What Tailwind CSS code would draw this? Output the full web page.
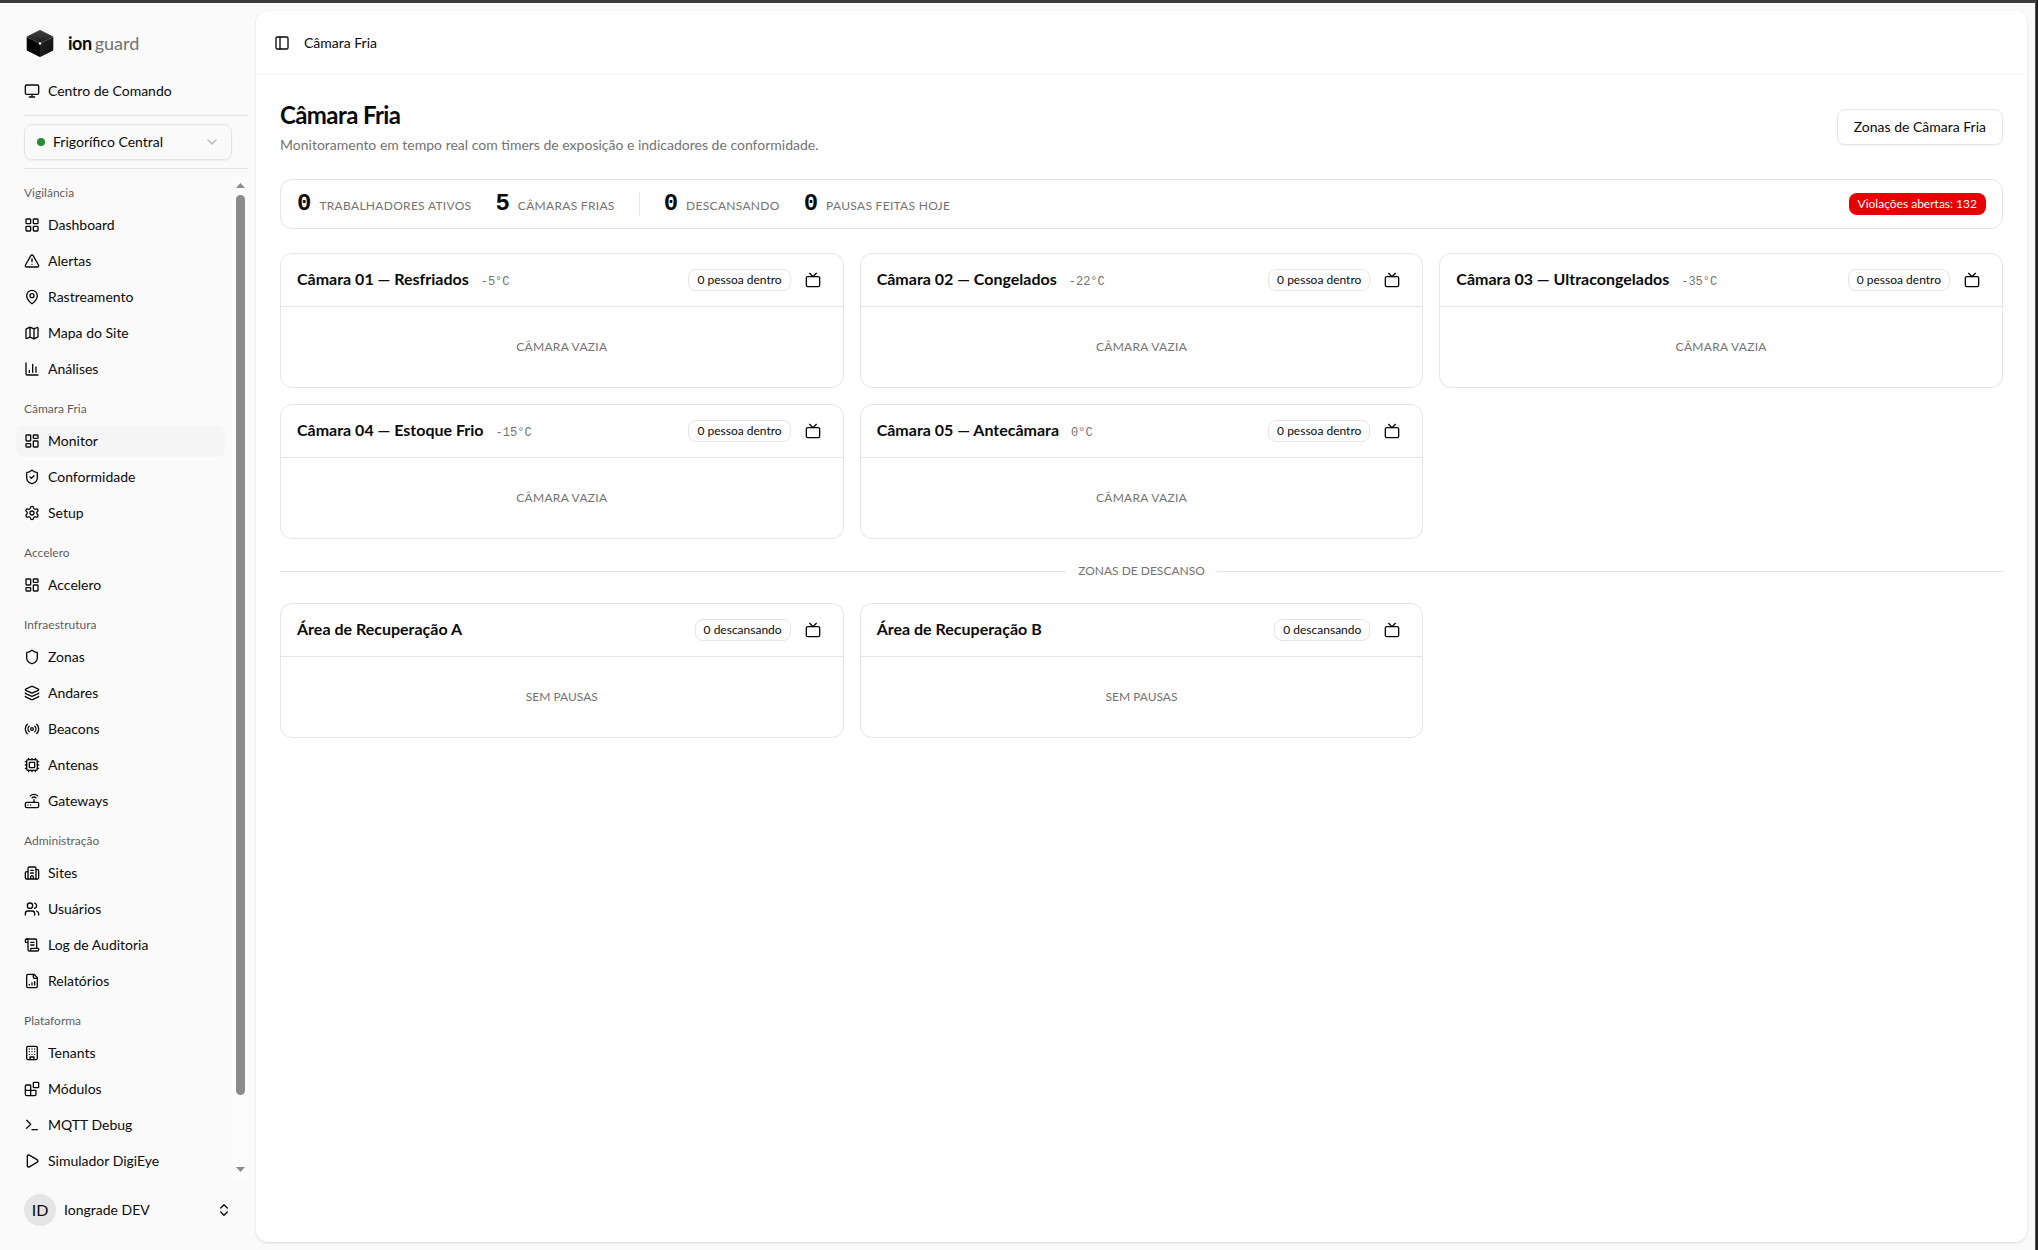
<!DOCTYPE html>
<html lang="pt-BR">
<head>
  <meta charset="UTF-8" />
  <meta name="viewport" content="width=device-width, initial-scale=1.0" />
  <title>Câmara Fria - ionguard</title>
  <script src="https://cdn.jsdelivr.net/npm/@tailwindcss/browser@4"></script>
</head>
<body class="h-screen overflow-hidden bg-[#222222] pr-[2px] font-['Lato',sans-serif] text-sm text-neutral-950">

  <!-- Icon sprite -->
  <svg class="hidden" xmlns="http://www.w3.org/2000/svg">
    <symbol id="monitor" viewBox="0 0 24 24"><rect width="20" height="14" x="2" y="3" rx="2" /><path d="M8 21h8M12 17v4" /></symbol>
    <symbol id="chevron-down" viewBox="0 0 24 24"><path d="m6 9 6 6 6-6" /></symbol>
    <symbol id="chevrons-up-down" viewBox="0 0 24 24"><path d="m7 15 5 5 5-5M7 9l5-5 5 5" /></symbol>
    <symbol id="panel-left" viewBox="0 0 24 24"><rect width="18" height="18" x="3" y="3" rx="2" /><path d="M9 3v18" /></symbol>
    <symbol id="layout-grid" viewBox="0 0 24 24"><rect width="7" height="7" x="3" y="3" rx="1" /><rect width="7" height="7" x="14" y="3" rx="1" /><rect width="7" height="7" x="14" y="14" rx="1" /><rect width="7" height="7" x="3" y="14" rx="1" /></symbol>
    <symbol id="layout-dashboard" viewBox="0 0 24 24"><rect width="7" height="9" x="3" y="3" rx="1" /><rect width="7" height="5" x="14" y="3" rx="1" /><rect width="7" height="9" x="14" y="12" rx="1" /><rect width="7" height="5" x="3" y="16" rx="1" /></symbol>
    <symbol id="alert" viewBox="0 0 24 24"><path d="m21.73 18-8-14a2 2 0 0 0-3.48 0l-8 14A2 2 0 0 0 4 21h16a2 2 0 0 0 1.73-3M12 9v4M12 17h.01" /></symbol>
    <symbol id="map-pin" viewBox="0 0 24 24"><path d="M20 10c0 4.993-5.539 10.193-7.399 11.799a1 1 0 0 1-1.202 0C9.539 20.193 4 14.993 4 10a8 8 0 0 1 16 0" /><circle cx="12" cy="10" r="3" /></symbol>
    <symbol id="map" viewBox="0 0 24 24"><path d="M14.106 5.553a2 2 0 0 0 1.788 0l3.659-1.83A1 1 0 0 1 21 4.619v12.764a1 1 0 0 1-.553.894l-4.553 2.277a2 2 0 0 1-1.788 0l-4.212-2.106a2 2 0 0 0-1.788 0l-3.659 1.83A1 1 0 0 1 3 19.381V6.618a1 1 0 0 1 .553-.894l4.553-2.277a2 2 0 0 1 1.788 0zM15 5.764v15M9 3.236v15" /></symbol>
    <symbol id="chart" viewBox="0 0 24 24"><path d="M3 3v16a2 2 0 0 0 2 2h16M18 17V9M13 17V5M8 17v-3" /></symbol>
    <symbol id="shield" viewBox="0 0 24 24"><path d="M20 13c0 5-3.5 7.5-7.66 8.95a1 1 0 0 1-.67-.01C7.5 20.5 4 18 4 13V6a1 1 0 0 1 1-1c2 0 4.5-1.2 6.24-2.72a1.17 1.17 0 0 1 1.52 0C14.51 3.81 17 5 19 5a1 1 0 0 1 1 1z" /></symbol>
    <symbol id="shield-check" viewBox="0 0 24 24"><path d="M20 13c0 5-3.5 7.5-7.66 8.95a1 1 0 0 1-.67-.01C7.5 20.5 4 18 4 13V6a1 1 0 0 1 1-1c2 0 4.5-1.2 6.24-2.72a1.17 1.17 0 0 1 1.52 0C14.51 3.81 17 5 19 5a1 1 0 0 1 1 1z" /><path d="m9 12 2 2 4-4" /></symbol>
    <symbol id="settings" viewBox="0 0 24 24"><path d="M9.671 4.136a2.34 2.34 0 0 1 4.659 0 2.34 2.34 0 0 0 3.319 1.915 2.34 2.34 0 0 1 2.33 4.033 2.34 2.34 0 0 0 0 3.831 2.34 2.34 0 0 1-2.33 4.033 2.34 2.34 0 0 0-3.319 1.915 2.34 2.34 0 0 1-4.659 0 2.34 2.34 0 0 0-3.32-1.915 2.34 2.34 0 0 1-2.33-4.033 2.34 2.34 0 0 0 0-3.831A2.34 2.34 0 0 1 6.35 6.051a2.34 2.34 0 0 0 3.319-1.915" /><circle cx="12" cy="12" r="3" /></symbol>
    <symbol id="layers" viewBox="0 0 24 24"><path d="M12.83 2.18a2 2 0 0 0-1.66 0L2.6 6.08a1 1 0 0 0 0 1.83l8.58 3.91a2 2 0 0 0 1.66 0l8.58-3.9a1 1 0 0 0 0-1.83z" /><path d="M2 12a1 1 0 0 0 .58.91l8.6 3.91a2 2 0 0 0 1.65 0l8.58-3.9A1 1 0 0 0 22 12" /><path d="M2 17a1 1 0 0 0 .58.91l8.6 3.91a2 2 0 0 0 1.65 0l8.58-3.9A1 1 0 0 0 22 17" /></symbol>
    <symbol id="radio" viewBox="0 0 24 24"><path d="M4.9 19.1C1 15.2 1 8.8 4.9 4.9M7.8 16.2c-2.3-2.3-2.3-6.1 0-8.5M16.2 7.8c2.3 2.3 2.3 6.1 0 8.5M19.1 4.9C23 8.8 23 15.1 19.1 19" /><circle cx="12" cy="12" r="2" /></symbol>
    <symbol id="cpu" viewBox="0 0 24 24"><path d="M12 20v2M12 2v2M17 20v2M17 2v2M2 12h2M2 17h2M2 7h2M20 12h2M20 17h2M20 7h2M7 20v2M7 2v2" /><rect x="4" y="4" width="16" height="16" rx="2" /><rect x="8" y="8" width="8" height="8" rx="1" /></symbol>
    <symbol id="router" viewBox="0 0 24 24"><rect width="20" height="8" x="2" y="14" rx="2" /><path d="M6.01 18H6M10.01 18H10M15 10v4M17.84 7.17a4 4 0 0 0-5.66 0M20.66 4.34a8 8 0 0 0-11.31 0" /></symbol>
    <symbol id="building-2" viewBox="0 0 24 24"><path d="M10 12h4M10 8h4M14 21v-3a2 2 0 0 0-4 0v3M6 10H4a2 2 0 0 0-2 2v7a2 2 0 0 0 2 2h16a2 2 0 0 0 2-2V9a2 2 0 0 0-2-2h-2" /><path d="M6 21V5a2 2 0 0 1 2-2h8a2 2 0 0 1 2 2v16" /></symbol>
    <symbol id="users" viewBox="0 0 24 24"><path d="M16 21v-2a4 4 0 0 0-4-4H6a4 4 0 0 0-4 4v2M16 3.128a4 4 0 0 1 0 7.744M22 21v-2a4 4 0 0 0-3-3.87" /><circle cx="9" cy="7" r="4" /></symbol>
    <symbol id="scroll" viewBox="0 0 24 24"><path d="M15 12h-5M15 8h-5M19 17V5a2 2 0 0 0-2-2H4" /><path d="M8 21h12a2 2 0 0 0 2-2v-1a1 1 0 0 0-1-1H11a1 1 0 0 0-1 1v1a2 2 0 1 1-4 0V5a2 2 0 1 0-4 0v2a1 1 0 0 0 1 1h3" /></symbol>
    <symbol id="file-chart" viewBox="0 0 24 24"><path d="M15 2H6a2 2 0 0 0-2 2v16a2 2 0 0 0 2 2h12a2 2 0 0 0 2-2V7z" /><path d="M14 2v4a2 2 0 0 0 2 2h4M8 18v-1M12 18v-3M16 18v-5" /></symbol>
    <symbol id="building" viewBox="0 0 24 24"><rect width="16" height="20" x="4" y="2" rx="2" /><path d="M9 22v-4h6v4M8 6h.01M16 6h.01M12 6h.01M12 10h.01M12 14h.01M16 10h.01M16 14h.01M8 10h.01M8 14h.01" /></symbol>
    <symbol id="blocks" viewBox="0 0 24 24"><path d="M10 22V7a1 1 0 0 0-1-1H4a2 2 0 0 0-2 2v12a2 2 0 0 0 2 2h12a2 2 0 0 0 2-2v-5a1 1 0 0 0-1-1H2" /><rect x="14" y="2" width="8" height="8" rx="1" /></symbol>
    <symbol id="terminal" viewBox="0 0 24 24"><path d="M12 19h8M4 17l6-6-6-6" /></symbol>
    <symbol id="play" viewBox="0 0 24 24"><path d="M5 5a2 2 0 0 1 3.008-1.728l11.997 6.998a2 2 0 0 1 .003 3.458l-12 7A2 2 0 0 1 5 19z" /></symbol>
    <symbol id="tv" viewBox="0 0 24 24"><path d="m17 2-5 5-5-5" /><rect width="20" height="15" x="2" y="7" rx="2" /></symbol>
  </svg>

  <div class="flex h-full border-t-3 border-r border-t-[#3c3c3c] border-r-[#555555] bg-neutral-50">

    <!-- Sidebar -->
    <aside class="flex w-64 shrink-0 flex-col py-2">
      <a href="#" class="flex h-16 shrink-0 items-center gap-3 pl-6">
        <svg class="size-8" viewBox="0 0 32 32">
          <defs>
            <linearGradient id="cube-top" x1="0" y1="0" x2="0" y2="1"><stop stop-color="#444444" /><stop offset="1" stop-color="#1c1c1c" /></linearGradient>
            <linearGradient id="cube-right" x1="0" y1="0" x2="1" y2="1"><stop stop-color="#262626" /><stop offset="1" stop-color="#0c0c0c" /></linearGradient>
          </defs>
          <path d="M15.300 3.300a1.500 1.500 0 0 1 1.400 0l12 6 .6.700L16 16.500 2.700 10l.6-.7z" fill="url(#cube-top)" />
          <path d="M2.700 10 16 16.500V30l-.7-.2-12-6a1.200 1.200 0 0 1-.6-1z" fill="#040404" />
          <path d="M29.300 10 16 16.500V30l.7-.2 12-6a1.200 1.200 0 0 0 .6-1z" fill="url(#cube-right)" />
          <path d="M2.700 10 16 16.500 29.300 10" fill="none" stroke="#4a4a4a" stroke-width=".5" />
          <circle cx="16" cy="16.500" r="1.200" fill="#ffffff" />
        </svg>
        <span class="flex gap-[3px] text-lg"><b class="font-bold tracking-tight">ion</b><span class="text-neutral-500">guard</span></span>
      </a>

      <a href="#" class="mx-4 flex h-8 shrink-0 items-center gap-2 rounded-lg px-2">
        <svg class="size-4 fill-none stroke-current stroke-2" stroke-linecap="round" stroke-linejoin="round"><use href="#monitor" /></svg>
        Centro de Comando
      </a>

      <div class="mt-2 mr-2 ml-6 border-y border-neutral-200 py-2 pr-4">
        <div class="relative">
          <span class="absolute top-[14px] left-[13px] size-2 rounded-full bg-[#2a8a35]"></span>
          <select aria-label="Site" class="block h-9 w-full appearance-none rounded-lg border border-neutral-200 pr-8 pl-7 text-sm shadow-xs">
            <option>Frigorífico Central</option>
          </select>
          <svg class="absolute top-[10px] right-3 size-4 fill-none stroke-neutral-500/50 stroke-2" stroke-linecap="round" stroke-linejoin="round"><use href="#chevron-down" /></svg>
        </div>
      </div>

      <div class="mt-2 mr-2 flex min-h-0 flex-1">
        <nav class="flex-1 space-y-2 overflow-hidden pr-[7px] pl-4">
          <div>
            <h3 class="flex h-8 items-center px-2 text-xs text-neutral-950/70">Vigilância</h3>
            <div class="space-y-1">
              <a href="#" class="flex h-8 items-center gap-2 rounded-lg px-2"><svg class="size-4 fill-none stroke-current stroke-2" stroke-linecap="round" stroke-linejoin="round"><use href="#layout-grid" /></svg>Dashboard</a>
              <a href="#" class="flex h-8 items-center gap-2 rounded-lg px-2"><svg class="size-4 fill-none stroke-current stroke-2" stroke-linecap="round" stroke-linejoin="round"><use href="#alert" /></svg>Alertas</a>
              <a href="#" class="flex h-8 items-center gap-2 rounded-lg px-2"><svg class="size-4 fill-none stroke-current stroke-2" stroke-linecap="round" stroke-linejoin="round"><use href="#map-pin" /></svg>Rastreamento</a>
              <a href="#" class="flex h-8 items-center gap-2 rounded-lg px-2"><svg class="size-4 fill-none stroke-current stroke-2" stroke-linecap="round" stroke-linejoin="round"><use href="#map" /></svg>Mapa do Site</a>
              <a href="#" class="flex h-8 items-center gap-2 rounded-lg px-2"><svg class="size-4 fill-none stroke-current stroke-2" stroke-linecap="round" stroke-linejoin="round"><use href="#chart" /></svg>Análises</a>
            </div>
          </div>
          <div>
            <h3 class="flex h-8 items-center px-2 text-xs text-neutral-950/70">Câmara Fria</h3>
            <div class="space-y-1">
              <a href="#" class="flex h-8 items-center gap-2 rounded-lg bg-neutral-100 px-2"><svg class="size-4 fill-none stroke-current stroke-2" stroke-linecap="round" stroke-linejoin="round"><use href="#layout-dashboard" /></svg>Monitor</a>
              <a href="#" class="flex h-8 items-center gap-2 rounded-lg px-2"><svg class="size-4 fill-none stroke-current stroke-2" stroke-linecap="round" stroke-linejoin="round"><use href="#shield-check" /></svg>Conformidade</a>
              <a href="#" class="flex h-8 items-center gap-2 rounded-lg px-2"><svg class="size-4 fill-none stroke-current stroke-2" stroke-linecap="round" stroke-linejoin="round"><use href="#settings" /></svg>Setup</a>
            </div>
          </div>
          <div>
            <h3 class="flex h-8 items-center px-2 text-xs text-neutral-950/70">Accelero</h3>
            <a href="#" class="flex h-8 items-center gap-2 rounded-lg px-2"><svg class="size-4 fill-none stroke-current stroke-2" stroke-linecap="round" stroke-linejoin="round"><use href="#layout-dashboard" /></svg>Accelero</a>
          </div>
          <div>
            <h3 class="flex h-8 items-center px-2 text-xs text-neutral-950/70">Infraestrutura</h3>
            <div class="space-y-1">
              <a href="#" class="flex h-8 items-center gap-2 rounded-lg px-2"><svg class="size-4 fill-none stroke-current stroke-2" stroke-linecap="round" stroke-linejoin="round"><use href="#shield" /></svg>Zonas</a>
              <a href="#" class="flex h-8 items-center gap-2 rounded-lg px-2"><svg class="size-4 fill-none stroke-current stroke-2" stroke-linecap="round" stroke-linejoin="round"><use href="#layers" /></svg>Andares</a>
              <a href="#" class="flex h-8 items-center gap-2 rounded-lg px-2"><svg class="size-4 fill-none stroke-current stroke-2" stroke-linecap="round" stroke-linejoin="round"><use href="#radio" /></svg>Beacons</a>
              <a href="#" class="flex h-8 items-center gap-2 rounded-lg px-2"><svg class="size-4 fill-none stroke-current stroke-2" stroke-linecap="round" stroke-linejoin="round"><use href="#cpu" /></svg>Antenas</a>
              <a href="#" class="flex h-8 items-center gap-2 rounded-lg px-2"><svg class="size-4 fill-none stroke-current stroke-2" stroke-linecap="round" stroke-linejoin="round"><use href="#router" /></svg>Gateways</a>
            </div>
          </div>
          <div>
            <h3 class="flex h-8 items-center px-2 text-xs text-neutral-950/70">Administração</h3>
            <div class="space-y-1">
              <a href="#" class="flex h-8 items-center gap-2 rounded-lg px-2"><svg class="size-4 fill-none stroke-current stroke-2" stroke-linecap="round" stroke-linejoin="round"><use href="#building-2" /></svg>Sites</a>
              <a href="#" class="flex h-8 items-center gap-2 rounded-lg px-2"><svg class="size-4 fill-none stroke-current stroke-2" stroke-linecap="round" stroke-linejoin="round"><use href="#users" /></svg>Usuários</a>
              <a href="#" class="flex h-8 items-center gap-2 rounded-lg px-2"><svg class="size-4 fill-none stroke-current stroke-2" stroke-linecap="round" stroke-linejoin="round"><use href="#scroll" /></svg>Log de Auditoria</a>
              <a href="#" class="flex h-8 items-center gap-2 rounded-lg px-2"><svg class="size-4 fill-none stroke-current stroke-2" stroke-linecap="round" stroke-linejoin="round"><use href="#file-chart" /></svg>Relatórios</a>
            </div>
          </div>
          <div>
            <h3 class="flex h-8 items-center px-2 text-xs text-neutral-950/70">Plataforma</h3>
            <div class="space-y-1">
              <a href="#" class="flex h-8 items-center gap-2 rounded-lg px-2"><svg class="size-4 fill-none stroke-current stroke-2" stroke-linecap="round" stroke-linejoin="round"><use href="#building" /></svg>Tenants</a>
              <a href="#" class="flex h-8 items-center gap-2 rounded-lg px-2"><svg class="size-4 fill-none stroke-current stroke-2" stroke-linecap="round" stroke-linejoin="round"><use href="#blocks" /></svg>Módulos</a>
              <a href="#" class="flex h-8 items-center gap-2 rounded-lg px-2"><svg class="size-4 fill-none stroke-current stroke-2" stroke-linecap="round" stroke-linejoin="round"><use href="#terminal" /></svg>MQTT Debug</a>
              <a href="#" class="flex h-8 items-center gap-2 rounded-lg px-2"><svg class="size-4 fill-none stroke-current stroke-2" stroke-linecap="round" stroke-linejoin="round"><use href="#play" /></svg>Simulador DigiEye</a>
            </div>
          </div>
        </nav>
        <!-- Scrollbar -->
        <div class="flex w-4 flex-col items-center bg-[#fcfcfc] py-[6px]">
          <svg class="h-[5px] w-[9px] fill-[#8b8b8b]" viewBox="0 0 9 5"><path d="M0 5 4.500 0 9 5z" /></svg>
          <div class="mt-[7px] mb-1 w-full flex-1">
            <div class="mx-auto h-[93%] w-[9px] rounded-full bg-[#8b8b8b]"></div>
          </div>
          <svg class="h-[5px] w-[9px] fill-[#8b8b8b]" viewBox="0 0 9 5"><path d="M0 0 4.500 5 9 0z" /></svg>
        </div>
      </div>

      <button type="button" class="mx-4 my-2 flex h-12 shrink-0 items-center gap-2 rounded-lg px-2 text-left">
        <span class="flex size-8 items-center justify-center rounded-full bg-neutral-200 text-base">ID</span>
        <span class="flex-1">Iongrade DEV</span>
        <svg class="size-4 fill-none stroke-current stroke-2" stroke-linecap="round" stroke-linejoin="round"><use href="#chevrons-up-down" /></svg>
      </button>
    </aside>

    <!-- Content -->
    <main class="my-2 mr-2 flex-1 rounded-xl bg-white shadow-sm">
      <header class="flex h-16 items-center gap-2 border-b border-neutral-100 px-3">
        <button type="button" aria-label="Alternar menu" class="flex size-7 items-center justify-center">
          <svg class="size-4 fill-none stroke-current stroke-2" stroke-linecap="round" stroke-linejoin="round"><use href="#panel-left" /></svg>
        </button>
        <span>Câmara Fria</span>
      </header>

      <div class="space-y-6 p-6">
        <div class="flex items-center justify-between">
          <div>
            <h1 class="text-2xl font-bold tracking-tight">Câmara Fria</h1>
            <p class="mt-1 text-neutral-500">Monitoramento em tempo real com timers de exposição e indicadores de conformidade.</p>
          </div>
          <button type="button" class="h-9 rounded-lg border border-neutral-200 px-4 shadow-xs">Zonas de Câmara Fria</button>
        </div>

        <!-- Totals -->
        <div class="flex items-center gap-6 rounded-xl border border-neutral-200 px-4 py-2">
          <div class="flex items-baseline gap-2"><span class="font-['Liberation_Mono',monospace] text-2xl font-bold">0</span><span class="text-xs tracking-wide text-neutral-500 uppercase">Trabalhadores ativos</span></div>
          <div class="flex items-baseline gap-2"><span class="font-['Liberation_Mono',monospace] text-2xl font-bold">5</span><span class="text-xs tracking-wide text-neutral-500 uppercase">Câmaras frias</span></div>
          <div class="h-6 w-px bg-neutral-200"></div>
          <div class="flex items-baseline gap-2"><span class="font-['Liberation_Mono',monospace] text-2xl font-bold">0</span><span class="text-xs tracking-wide text-neutral-500 uppercase">Descansando</span></div>
          <div class="flex items-baseline gap-2"><span class="font-['Liberation_Mono',monospace] text-2xl font-bold">0</span><span class="text-xs tracking-wide text-neutral-500 uppercase">Pausas feitas hoje</span></div>
          <span class="ml-auto rounded-lg border border-transparent bg-[#e60000] px-2 py-[2px] text-xs text-white">Violações abertas: 132</span>
        </div>

        <!-- Cold rooms -->
        <div class="grid grid-cols-3 gap-4">
          <section class="rounded-xl border border-neutral-200">
            <div class="flex items-center gap-2 border-b border-neutral-200 px-4 py-3">
              <div class="flex flex-1 items-baseline gap-3 pb-[2px]"><h2 class="text-base font-bold">Câmara 01 — Resfriados</h2><span class="font-['Liberation_Mono',monospace] text-xs text-neutral-500">-5°C</span></div>
              <span class="rounded-lg border border-neutral-200 px-2 py-[2px] text-xs">0 pessoa dentro</span>
              <button type="button" aria-label="Abrir na TV" class="flex size-7 items-center justify-center"><svg class="size-4 fill-none stroke-current stroke-2" stroke-linecap="round" stroke-linejoin="round"><use href="#tv" /></svg></button>
            </div>
            <p class="flex h-20 items-center justify-center text-xs tracking-wide text-neutral-500 uppercase">Câmara vazia</p>
          </section>
          <section class="rounded-xl border border-neutral-200">
            <div class="flex items-center gap-2 border-b border-neutral-200 px-4 py-3">
              <div class="flex flex-1 items-baseline gap-3 pb-[2px]"><h2 class="text-base font-bold">Câmara 02 — Congelados</h2><span class="font-['Liberation_Mono',monospace] text-xs text-neutral-500">-22°C</span></div>
              <span class="rounded-lg border border-neutral-200 px-2 py-[2px] text-xs">0 pessoa dentro</span>
              <button type="button" aria-label="Abrir na TV" class="flex size-7 items-center justify-center"><svg class="size-4 fill-none stroke-current stroke-2" stroke-linecap="round" stroke-linejoin="round"><use href="#tv" /></svg></button>
            </div>
            <p class="flex h-20 items-center justify-center text-xs tracking-wide text-neutral-500 uppercase">Câmara vazia</p>
          </section>
          <section class="rounded-xl border border-neutral-200">
            <div class="flex items-center gap-2 border-b border-neutral-200 px-4 py-3">
              <div class="flex flex-1 items-baseline gap-3 pb-[2px]"><h2 class="text-base font-bold">Câmara 03 — Ultracongelados</h2><span class="font-['Liberation_Mono',monospace] text-xs text-neutral-500">-35°C</span></div>
              <span class="rounded-lg border border-neutral-200 px-2 py-[2px] text-xs">0 pessoa dentro</span>
              <button type="button" aria-label="Abrir na TV" class="flex size-7 items-center justify-center"><svg class="size-4 fill-none stroke-current stroke-2" stroke-linecap="round" stroke-linejoin="round"><use href="#tv" /></svg></button>
            </div>
            <p class="flex h-20 items-center justify-center text-xs tracking-wide text-neutral-500 uppercase">Câmara vazia</p>
          </section>
          <section class="rounded-xl border border-neutral-200">
            <div class="flex items-center gap-2 border-b border-neutral-200 px-4 py-3">
              <div class="flex flex-1 items-baseline gap-3 pb-[2px]"><h2 class="text-base font-bold">Câmara 04 — Estoque Frio</h2><span class="font-['Liberation_Mono',monospace] text-xs text-neutral-500">-15°C</span></div>
              <span class="rounded-lg border border-neutral-200 px-2 py-[2px] text-xs">0 pessoa dentro</span>
              <button type="button" aria-label="Abrir na TV" class="flex size-7 items-center justify-center"><svg class="size-4 fill-none stroke-current stroke-2" stroke-linecap="round" stroke-linejoin="round"><use href="#tv" /></svg></button>
            </div>
            <p class="flex h-20 items-center justify-center text-xs tracking-wide text-neutral-500 uppercase">Câmara vazia</p>
          </section>
          <section class="rounded-xl border border-neutral-200">
            <div class="flex items-center gap-2 border-b border-neutral-200 px-4 py-3">
              <div class="flex flex-1 items-baseline gap-3 pb-[2px]"><h2 class="text-base font-bold">Câmara 05 — Antecâmara</h2><span class="font-['Liberation_Mono',monospace] text-xs text-neutral-500">0°C</span></div>
              <span class="rounded-lg border border-neutral-200 px-2 py-[2px] text-xs">0 pessoa dentro</span>
              <button type="button" aria-label="Abrir na TV" class="flex size-7 items-center justify-center"><svg class="size-4 fill-none stroke-current stroke-2" stroke-linecap="round" stroke-linejoin="round"><use href="#tv" /></svg></button>
            </div>
            <p class="flex h-20 items-center justify-center text-xs tracking-wide text-neutral-500 uppercase">Câmara vazia</p>
          </section>
        </div>

        <div class="flex items-center gap-3">
          <div class="h-px flex-1 bg-neutral-200"></div>
          <span class="text-xs text-neutral-500 uppercase">Zonas de descanso</span>
          <div class="h-px flex-1 bg-neutral-200"></div>
        </div>

        <!-- Rest areas -->
        <div class="grid grid-cols-3 gap-4">
          <section class="rounded-xl border border-neutral-200">
            <div class="flex items-center gap-2 border-b border-neutral-200 px-4 py-3">
              <h2 class="flex-1 pb-[2px] text-base font-bold">Área de Recuperação A</h2>
              <span class="rounded-lg border border-neutral-200 px-2 py-[2px] text-xs">0 descansando</span>
              <button type="button" aria-label="Abrir na TV" class="flex size-7 items-center justify-center"><svg class="size-4 fill-none stroke-current stroke-2" stroke-linecap="round" stroke-linejoin="round"><use href="#tv" /></svg></button>
            </div>
            <p class="flex h-20 items-center justify-center text-xs text-neutral-500 uppercase">Sem pausas</p>
          </section>
          <section class="rounded-xl border border-neutral-200">
            <div class="flex items-center gap-2 border-b border-neutral-200 px-4 py-3">
              <h2 class="flex-1 pb-[2px] text-base font-bold">Área de Recuperação B</h2>
              <span class="rounded-lg border border-neutral-200 px-2 py-[2px] text-xs">0 descansando</span>
              <button type="button" aria-label="Abrir na TV" class="flex size-7 items-center justify-center"><svg class="size-4 fill-none stroke-current stroke-2" stroke-linecap="round" stroke-linejoin="round"><use href="#tv" /></svg></button>
            </div>
            <p class="flex h-20 items-center justify-center text-xs text-neutral-500 uppercase">Sem pausas</p>
          </section>
        </div>
      </div>
    </main>
  </div>
</body>
</html>
